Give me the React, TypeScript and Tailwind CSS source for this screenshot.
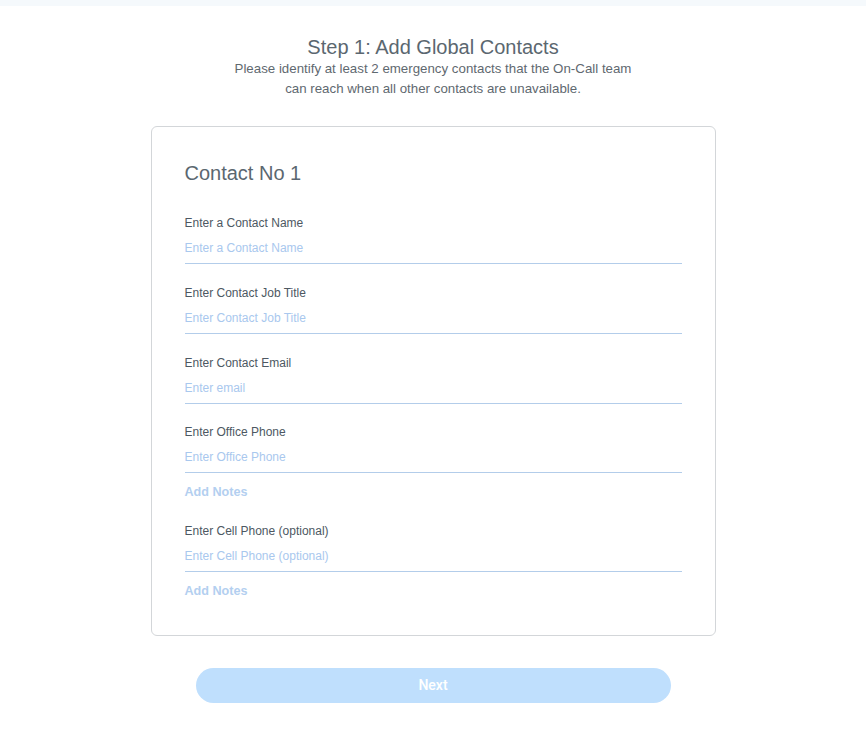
const fields = [
  { label: "Enter a Contact Name", placeholder: "Enter a Contact Name", notes: false, gap: "" },
  { label: "Enter Contact Job Title", placeholder: "Enter Contact Job Title", notes: false, gap: "mt-[22px]" },
  { label: "Enter Contact Email", placeholder: "Enter email", notes: false, gap: "mt-[22px]" },
  { label: "Enter Office Phone", placeholder: "Enter Office Phone", notes: true, gap: "mt-[21px]" },
  { label: "Enter Cell Phone (optional)", placeholder: "Enter Cell Phone (optional)", notes: true, gap: "mt-[24px]" },
];

export default function App() {
  return (
    <div className="min-h-[740px] bg-white font-['Liberation_Sans',Arial,sans-serif]">
      <div className="h-[6px] bg-[#f5f9fc]" />
      {/* header */}
      <div className="flex flex-col items-center pt-[29px]">
        <h1 className="text-[20px] leading-[24px] text-[#5b6770]">Step 1: Add Global Contacts</h1>
        <p className="w-[420px] text-center text-[13.3px] leading-[20px] text-[#5f6970]">
          Please identify at least 2 emergency contacts that the On-Call team can reach when all other contacts are unavailable.
        </p>
      </div>

      {/* card */}
      <div className="mx-auto mt-[27px] w-[565px] rounded-[6px] border border-[#d3d6d9] px-[33px] pt-[34px] pb-[36px]">
        <h2 className="text-[20px] leading-[24px] text-[#5b6770]">Contact No 1</h2>
        <div className="mt-[31px] flex flex-col">
          {fields.map((f, i) => (
            <div key={i} className={f.gap}>
              <label className="block text-[12px] leading-[14px] text-[#4d5862]">{f.label}</label>
              <input
                className="mt-[5px] block h-[29px] w-full border-b border-[#b3cdea] bg-transparent pb-[2px] text-[12px] text-[#4d5862] outline-none placeholder:text-[#a9c8ee]"
                placeholder={f.placeholder}
              />
              {f.notes && (
                <div className="mt-[12px] text-[12.6px] leading-[15px] font-bold text-[#b3cff0]">Add Notes</div>
              )}
            </div>
          ))}
        </div>
      </div>

      <div className="mt-[32px] flex justify-center">
        <button className="h-[35px] w-[475px] rounded-full bg-[#bfdffd] font-['Roboto',sans-serif] text-[14px] font-medium text-white">
          Next
        </button>
      </div>
    </div>
  );
}
